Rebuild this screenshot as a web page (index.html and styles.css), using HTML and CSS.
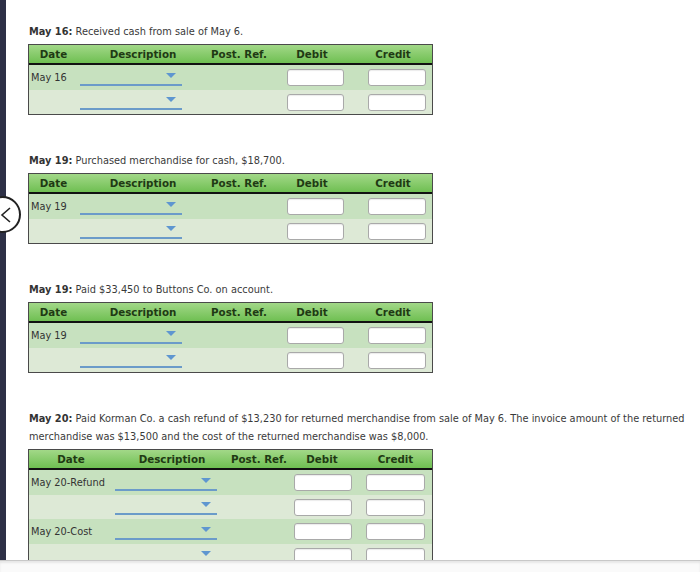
FILE: index.html
```html
<!DOCTYPE html>
<html>
<head>
<meta charset="utf-8">
<link rel="stylesheet" href="styles.css">
</head>
<body>
<div class="frame">
  <div class="edge"></div>
  <div class="content">
    <section class="entry">
      <p class="prompt"><b>May 16:</b> Received cash from sale of May 6.</p>
      <div class="journal j-small">
        <div class="row head"><span>Date</span><span>Description</span><span>Post. Ref.</span><span>Debit</span><span>Credit</span></div>
        <div class="row r1"><span class="date">May 16</span><span class="desc"><i class="dd"></i></span><span></span><span class="amt deb"><i class="box"></i></span><span class="amt cred"><i class="box"></i></span></div>
        <div class="row r2"><span class="date"></span><span class="desc"><i class="dd"></i></span><span></span><span class="amt deb"><i class="box"></i></span><span class="amt cred"><i class="box"></i></span></div>
      </div>
    </section>
    <section class="entry">
      <p class="prompt"><b>May 19:</b> Purchased merchandise for cash, $18,700.</p>
      <div class="journal j-small">
        <div class="row head"><span>Date</span><span>Description</span><span>Post. Ref.</span><span>Debit</span><span>Credit</span></div>
        <div class="row r1"><span class="date">May 19</span><span class="desc"><i class="dd"></i></span><span></span><span class="amt deb"><i class="box"></i></span><span class="amt cred"><i class="box"></i></span></div>
        <div class="row r2"><span class="date"></span><span class="desc"><i class="dd"></i></span><span></span><span class="amt deb"><i class="box"></i></span><span class="amt cred"><i class="box"></i></span></div>
      </div>
    </section>
    <section class="entry">
      <p class="prompt"><b>May 19:</b> Paid $33,450 to Buttons Co. on account.</p>
      <div class="journal j-small">
        <div class="row head"><span>Date</span><span>Description</span><span>Post. Ref.</span><span>Debit</span><span>Credit</span></div>
        <div class="row r1"><span class="date">May 19</span><span class="desc"><i class="dd"></i></span><span></span><span class="amt deb"><i class="box"></i></span><span class="amt cred"><i class="box"></i></span></div>
        <div class="row r2"><span class="date"></span><span class="desc"><i class="dd"></i></span><span></span><span class="amt deb"><i class="box"></i></span><span class="amt cred"><i class="box"></i></span></div>
      </div>
    </section>
    <section class="entry last">
      <p class="prompt"><b>May 20:</b> Paid Korman Co. a cash refund of $13,230 for returned merchandise from sale of May 6. The invoice amount of the returned<br>merchandise was $13,500 and the cost of the returned merchandise was $8,000.</p>
      <div class="journal j-wide">
        <div class="row head"><span>Date</span><span>Description</span><span>Post. Ref.</span><span>Debit</span><span>Credit</span></div>
        <div class="row r1"><span class="date">May 20-Refund</span><span class="desc"><i class="dd"></i></span><span></span><span class="amt deb"><i class="box"></i></span><span class="amt cred"><i class="box"></i></span></div>
        <div class="row r2"><span class="date"></span><span class="desc"><i class="dd"></i></span><span></span><span class="amt deb"><i class="box"></i></span><span class="amt cred"><i class="box"></i></span></div>
        <div class="row r1"><span class="date">May 20-Cost</span><span class="desc"><i class="dd"></i></span><span></span><span class="amt deb"><i class="box"></i></span><span class="amt cred"><i class="box"></i></span></div>
        <div class="row r2"><span class="date"></span><span class="desc"><i class="dd"></i></span><span></span><span class="amt deb"><i class="box"></i></span><span class="amt cred"><i class="box"></i></span></div>
      </div>
    </section>
  </div>
  <button class="back" aria-label="Previous">
    <svg width="12" height="18" viewBox="0 0 12 18"><path d="M10 2 L2 9 L10 16" fill="none" stroke="#222" stroke-width="1.6"/></svg>
  </button>
</div>
<div class="bottom"></div>
</body>
</html>
```
FILE: styles.css
```css
html, body {
  margin: 0;
  padding: 0;
  background: #fff;
}
body {
  font-family: "DejaVu Sans", Verdana, sans-serif;
  font-size: 9.8px;
  color: #333;
}
.frame {
  position: relative;
  display: flex;
  height: 560px;
  overflow: hidden;
}
.edge {
  width: 6px;
  flex: none;
  background: #2d3046;
}
.content {
  flex: 1;
  padding: 23px 0 0 22px;
}
.entry {
  margin-bottom: 37px;
}
.prompt {
  margin: 0 0 3px 1px;
  line-height: 18px;
  color: #3a3a3a;
}
.prompt b {
  color: #333;
}
.journal {
  width: 405px;
  border: 1px solid #4a4a4a;
  box-sizing: border-box;
}
.row {
  display: grid;
  align-items: center;
}
.j-small .row {
  grid-template-columns: 49px 130px 62px 84px 78px;
}
.j-wide .row {
  grid-template-columns: 84px 118px 54px 74px 73px;
}
.head {
  height: 18px;
  background: linear-gradient(#a2d888, #6fbf52);
  border-bottom: 2px solid #111;
  font-weight: bold;
  color: #1f3a14;
  text-align: center;
  font-size: 10.3px;
  white-space: nowrap;
}
.r1 {
  height: 25px;
  background: #c7e1bf;
}
.r2 {
  height: 24px;
  background: #dde9d6;
}
.date {
  padding-left: 2px;
  color: #333;
  white-space: nowrap;
}
.desc {
  position: relative;
  height: 100%;
}
.dd {
  position: absolute;
  left: 2px;
  width: 102px;
  bottom: 4px;
  height: 0;
  border-bottom: 2px solid #6b9bc9;
}
.dd::after {
  content: "";
  position: absolute;
  right: 6px;
  top: -11px;
  border-left: 5px solid transparent;
  border-right: 5px solid transparent;
  border-top: 5px solid #5e96d0;
}
.amt {
  display: flex;
}
.box {
  display: block;
  height: 17px;
  background: #fff;
  border: 1px solid #a9a9a9;
  border-radius: 3px;
  box-sizing: border-box;
  box-shadow: inset 0 1px 1px rgba(0,0,0,0.08);
}
.j-small .deb .box { margin-left: 17px; width: 57px; }
.j-small .cred .box { margin-left: 14px; width: 58px; }
.j-wide .deb .box { margin-left: 9px; width: 58px; }
.j-wide .cred .box { margin-left: 7px; width: 59px; }
.back {
  position: absolute;
  left: -16px;
  top: 196px;
  width: 37px;
  height: 37px;
  border-radius: 50%;
  border: 2px solid #222;
  background: #fff;
  padding: 0 0 0 14px;
  display: flex;
  align-items: center;
  justify-content: flex-start;
}
.bottom {
  height: 12px;
  background: #fafafa;
  border-top: 1px solid #c8c8c8;
  box-shadow: inset 0 2px 2px rgba(0,0,0,0.08);
}
```
